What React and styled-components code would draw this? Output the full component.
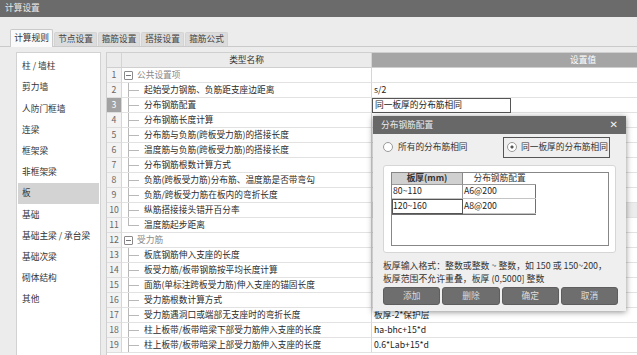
import styled, { createGlobalStyle } from 'styled-components'

const GlobalStyle = createGlobalStyle`
  html, body {
    margin: 0;
    background: #ececec;
    overflow: hidden;
  }
  body {
    font-family: "Noto Sans CJK SC", "Noto Sans", sans-serif;
    font-size: 8.7px;
    color: #333;
  }
  * { box-sizing: border-box; }
`

const Window = styled.div`
  position: relative;
  width: 637px;
  height: 355px;
  overflow: hidden;
  background: #ececec;
`

const TitleBar = styled.div`
  height: 17px;
  background: #6b6b6b;
  color: #ececec;
  padding-left: 5px;
  display: flex;
  align-items: center;
  line-height: 1;
`

const TabBar = styled.div`
  height: 30px;
  display: flex;
  align-items: flex-end;
  gap: 1px;
  padding-left: 10px;
  border-bottom: 1px solid #cacaca;
`

const Tab = styled.div`
  width: ${p => p.w}px;
  height: ${p => (p.active ? 18 : 14)}px;
  margin-bottom: ${p => (p.active ? -1 : 0)}px;
  background: ${p => (p.active ? '#fafafa' : '#dcdcdc')};
  border: 1px solid ${p => (p.active ? '#cacaca' : '#d4d4d4')};
  border-bottom: none;
  border-radius: 2px 2px 0 0;
  color: ${p => (p.active ? '#333' : '#444')};
  display: flex;
  align-items: center;
  justify-content: center;
  line-height: 1;
`

const Content = styled.div`
  display: flex;
  gap: 5px;
  padding: 5px 0 0 16px;
`

const SideList = styled.div`
  width: 85px;
  height: 310px;
  flex-shrink: 0;
  background: #fff;
  border: 1px solid #d2d2d2;
  padding-top: 3px;
`

const SideItem = styled.div`
  height: 21.2px;
  margin: 0 1px;
  padding-left: 4px;
  display: flex;
  align-items: center;
  line-height: 1;
  color: #333;
  background: ${p => (p.selected ? '#d3d3d3' : 'transparent')};
`

const Grid = styled.div`
  width: 700px;
  flex-shrink: 0;
  background: #fff;
  border: 1px solid #cfcfcf;
  display: grid;
  grid-template-columns: 15px 250px 1fr;
  grid-auto-rows: 15px;
`

const HeadCell = styled.div`
  background: ${p => (p.dark ? '#a5a5a5' : '#ebebeb')};
  color: ${p => (p.dark ? '#fff' : '#333')};
  border-right: 1px solid #d4d4d4;
  border-bottom: 1px solid #cfcfcf;
  display: flex;
  align-items: center;
  justify-content: ${p => (p.dark ? 'flex-start' : 'center')};
  padding-left: ${p => (p.dark ? 198 : 0)}px;
  line-height: 1;
`

const NumCell = styled.div`
  background: ${p => (p.selected ? '#a2a2a2' : '#f3f3f3')};
  color: ${p => (p.selected ? '#fff' : '#666')};
  border-right: 1px solid #d6d6d6;
  border-bottom: 1px solid #dedede;
  display: flex;
  align-items: center;
  justify-content: center;
  line-height: 1;
`

const NameCell = styled.div`
  border-right: 1px solid #d6d6d6;
  border-bottom: 1px solid #e2e2e2;
  display: flex;
  align-items: center;
  color: ${p => (p.group ? '#888' : '#2a2a2a')};
  line-height: 1;
  white-space: nowrap;
`

const ValueCell = styled.div`
  border-bottom: 1px solid #e2e2e2;
  background: ${p => (p.shaded ? '#ececec' : '#fff')};
  display: flex;
  align-items: center;
  padding-left: 2px;
  color: #222;
  line-height: 1;
  white-space: nowrap;
`

const EditBox = styled.div`
  width: 139px;
  height: 15px;
  margin-left: -2px;
  border: 1px solid #555;
  display: flex;
  align-items: center;
  padding-left: 2px;
`

const Toggle = styled.span`
  width: 9px;
  height: 9px;
  margin: 0 4px 0 2px;
  border: 1px solid #8a8a8a;
  border-radius: 1px;
  background: linear-gradient(#777, #777) center / 5px 1px no-repeat, #fff;
  flex-shrink: 0;
`

const Connector = styled.span`
  width: 11px;
  height: 100%;
  margin: 0 5px 0 6px;
  flex-shrink: 0;
  background:
    linear-gradient(#b8b8b8, #b8b8b8) 0 0 / 1px ${p => (p.last ? '50%' : '100%')} no-repeat,
    linear-gradient(#b8b8b8, #b8b8b8) 0 50% / 100% 1px no-repeat;
`

const Dialog = styled.div`
  position: absolute;
  left: 373px;
  top: 116px;
  width: 253px;
  height: 195px;
  background: #efefef;
  box-shadow: 0 1px 6px rgba(0, 0, 0, 0.45);
  display: flex;
  flex-direction: column;
`

const DialogTitle = styled.div`
  height: 18px;
  flex-shrink: 0;
  background: #686868;
  color: #ececec;
  padding: 0 8px;
  display: flex;
  align-items: center;
  justify-content: space-between;
  line-height: 1;
`

const Close = styled.span`
  font-family: "DejaVu Sans", sans-serif;
  font-size: 10px;
  color: #f2f2f2;
`

const RadioRow = styled.div`
  height: 26px;
  flex-shrink: 0;
  display: grid;
  grid-template-columns: 120px 107px;
  align-items: center;
  padding-left: 10px;
`

const RadioOption = styled.div`
  display: flex;
  align-items: center;
  gap: ${p => (p.boxed ? 4 : 5)}px;
  height: 21px;
  padding-left: ${p => (p.boxed ? 3 : 0)}px;
  border: ${p => (p.boxed ? '1px solid #555' : 'none')};
  color: #333;
  line-height: 1;
  white-space: nowrap;
  overflow: hidden;
`

const Radio = styled.span`
  width: 10px;
  height: 10px;
  border-radius: 50%;
  border: 1px solid #9a9a9a;
  background: ${p => (p.checked ? 'radial-gradient(circle, #555 0 1.3px, #fff 1.8px)' : '#fff')};
  flex-shrink: 0;
`

const Panel = styled.div`
  height: 88px;
  margin: 5px 10px 0;
  background: #fff;
  border: 1px solid #d6d6d6;
  border-radius: 3px;
  padding: 6px 6px 6px 7px;
  display: flex;
`

const TableArea = styled.div`
  flex: 1;
  border: 1px solid #878787;
`

const SpecTable = styled.div`
  display: grid;
  grid-template-columns: 71px 73px;
  grid-template-rows: 12px 14px 15px;
  width: 144px;
  border-right: 1px solid #707070;
  border-bottom: 1px solid #707070;
`

const SpecHead = styled.div`
  background: ${p => (p.shaded ? '#d0d0d0' : '#fff')};
  font-weight: ${p => (p.shaded ? 700 : 400)};
  border-bottom: 1px solid #9a9a9a;
  border-right: ${p => (p.shaded ? '1px solid #8a8a8a' : 'none')};
  display: flex;
  align-items: center;
  justify-content: center;
  line-height: 1;
  color: #333;
`

const SpecCell = styled.div`
  border: ${p => (p.selected ? '1px solid #555' : 'none')};
  border-bottom: 1px solid ${p => (p.selected ? '#555' : '#c4c4c4')};
  border-right: ${p => (p.first ? `1px solid ${p.selected ? '#555' : '#9a9a9a'}` : 'none')};
  display: flex;
  align-items: center;
  padding-left: ${p => (p.selected ? 0 : 1)}px;
  line-height: 1;
  color: #222;
`

const Hint = styled.div`
  margin: 6px 10px 0;
  font-size: 8.9px;
  line-height: 13px;
  color: #333;
  white-space: nowrap;
`

const ButtonRow = styled.div`
  margin: 2px 8px 0 10px;
  display: grid;
  grid-template-columns: repeat(4, 1fr);
  gap: 2px;
`

const Button = styled.div`
  height: 18px;
  background: #6e6e6e;
  border: 1px solid #5e5e5e;
  border-radius: 3px;
  color: #dedede;
  display: flex;
  align-items: center;
  justify-content: center;
  line-height: 1;
`

const tabs = [
  ['计算规则', 43, true],
  ['节点设置', 43],
  ['箍筋设置', 42],
  ['搭接设置', 43],
  ['箍筋公式', 43]
]

const sideItems = ['柱 / 墙柱', '剪力墙', '人防门框墙', '连梁', '框架梁', '非框架梁', '板', '基础', '基础主梁 / 承台梁', '基础次梁', '砌体结构', '其他']

const rows = [
  { name: '公共设置项', group: true },
  { name: '起始受力钢筋、负筋距支座边距离', value: 's/2' },
  { name: '分布钢筋配置', value: '同一板厚的分布筋相同', edit: true },
  { name: '分布钢筋长度计算' },
  { name: '分布筋与负筋(跨板受力筋)的搭接长度' },
  { name: '温度筋与负筋(跨板受力筋)的搭接长度' },
  { name: '分布钢筋根数计算方式' },
  { name: '负筋(跨板受力筋)分布筋、温度筋是否带弯勾' },
  { name: '负筋/跨板受力筋在板内的弯折长度' },
  { name: '纵筋搭接接头错开百分率', shaded: true },
  { name: '温度筋起步距离', last: true },
  { name: '受力筋', group: true },
  { name: '板底钢筋伸入支座的长度' },
  { name: '板受力筋/板带钢筋按平均长度计算' },
  { name: '面筋(单标注跨板受力筋)伸入支座的锚固长度' },
  { name: '受力筋根数计算方式' },
  { name: '受力筋遇洞口或端部无支座时的弯折长度', value: '板厚-2*保护层' },
  { name: '柱上板带/板带暗梁下部受力筋伸入支座的长度', value: 'ha-bhc+15*d' },
  { name: '柱上板带/板带暗梁上部受力筋伸入支座的长度', value: '0.6*Lab+15*d' }
]

const App = () => {
  return (
    <Window>
      <GlobalStyle />
      <TitleBar>计算设置</TitleBar>
      <TabBar>
        {tabs.map(([label, w, active]) => (
          <Tab key={label} w={w} active={active}>{label}</Tab>
        ))}
      </TabBar>
      <Content>
        <SideList>
          {sideItems.map(item => (
            <SideItem key={item} selected={item === '板'}>{item}</SideItem>
          ))}
        </SideList>
        <Grid>
          <HeadCell />
          <HeadCell>类型名称</HeadCell>
          <HeadCell dark>设置值</HeadCell>
          {rows.map((row, i) => (
            <Row key={i} index={i + 1} row={row} />
          ))}
        </Grid>
      </Content>

      <Dialog>
        <DialogTitle>
          <span>分布钢筋配置</span>
          <Close>✕</Close>
        </DialogTitle>
        <RadioRow>
          <RadioOption><Radio />所有的分布筋相同</RadioOption>
          <RadioOption boxed><Radio checked />同一板厚的分布筋相同</RadioOption>
        </RadioRow>
        <Panel>
          <TableArea>
            <SpecTable>
              <SpecHead shaded>板厚(mm)</SpecHead>
              <SpecHead>分布钢筋配置</SpecHead>
              <SpecCell first>80~110</SpecCell>
              <SpecCell>A6@200</SpecCell>
              <SpecCell first selected>120~160</SpecCell>
              <SpecCell>A8@200</SpecCell>
            </SpecTable>
          </TableArea>
        </Panel>
        <Hint>
          板厚输入格式：整数或整数 ~ 整数，如 150 或 150~200，<br />
          板厚范围不允许重叠，板厚 (0,5000] 整数
        </Hint>
        <ButtonRow>
          <Button>添加</Button>
          <Button>删除</Button>
          <Button>确定</Button>
          <Button>取消</Button>
        </ButtonRow>
      </Dialog>
    </Window>
  )
}

const Row = ({ index, row }) => {
  return (
    <>
      <NumCell selected={row.edit}>{index}</NumCell>
      <NameCell group={row.group}>
        {row.group ? <Toggle /> : <Connector last={row.last} />}
        {row.name}
      </NameCell>
      <ValueCell shaded={row.shaded}>
        {row.edit ? <EditBox>{row.value}</EditBox> : row.value}
      </ValueCell>
    </>
  )
}

export default App
